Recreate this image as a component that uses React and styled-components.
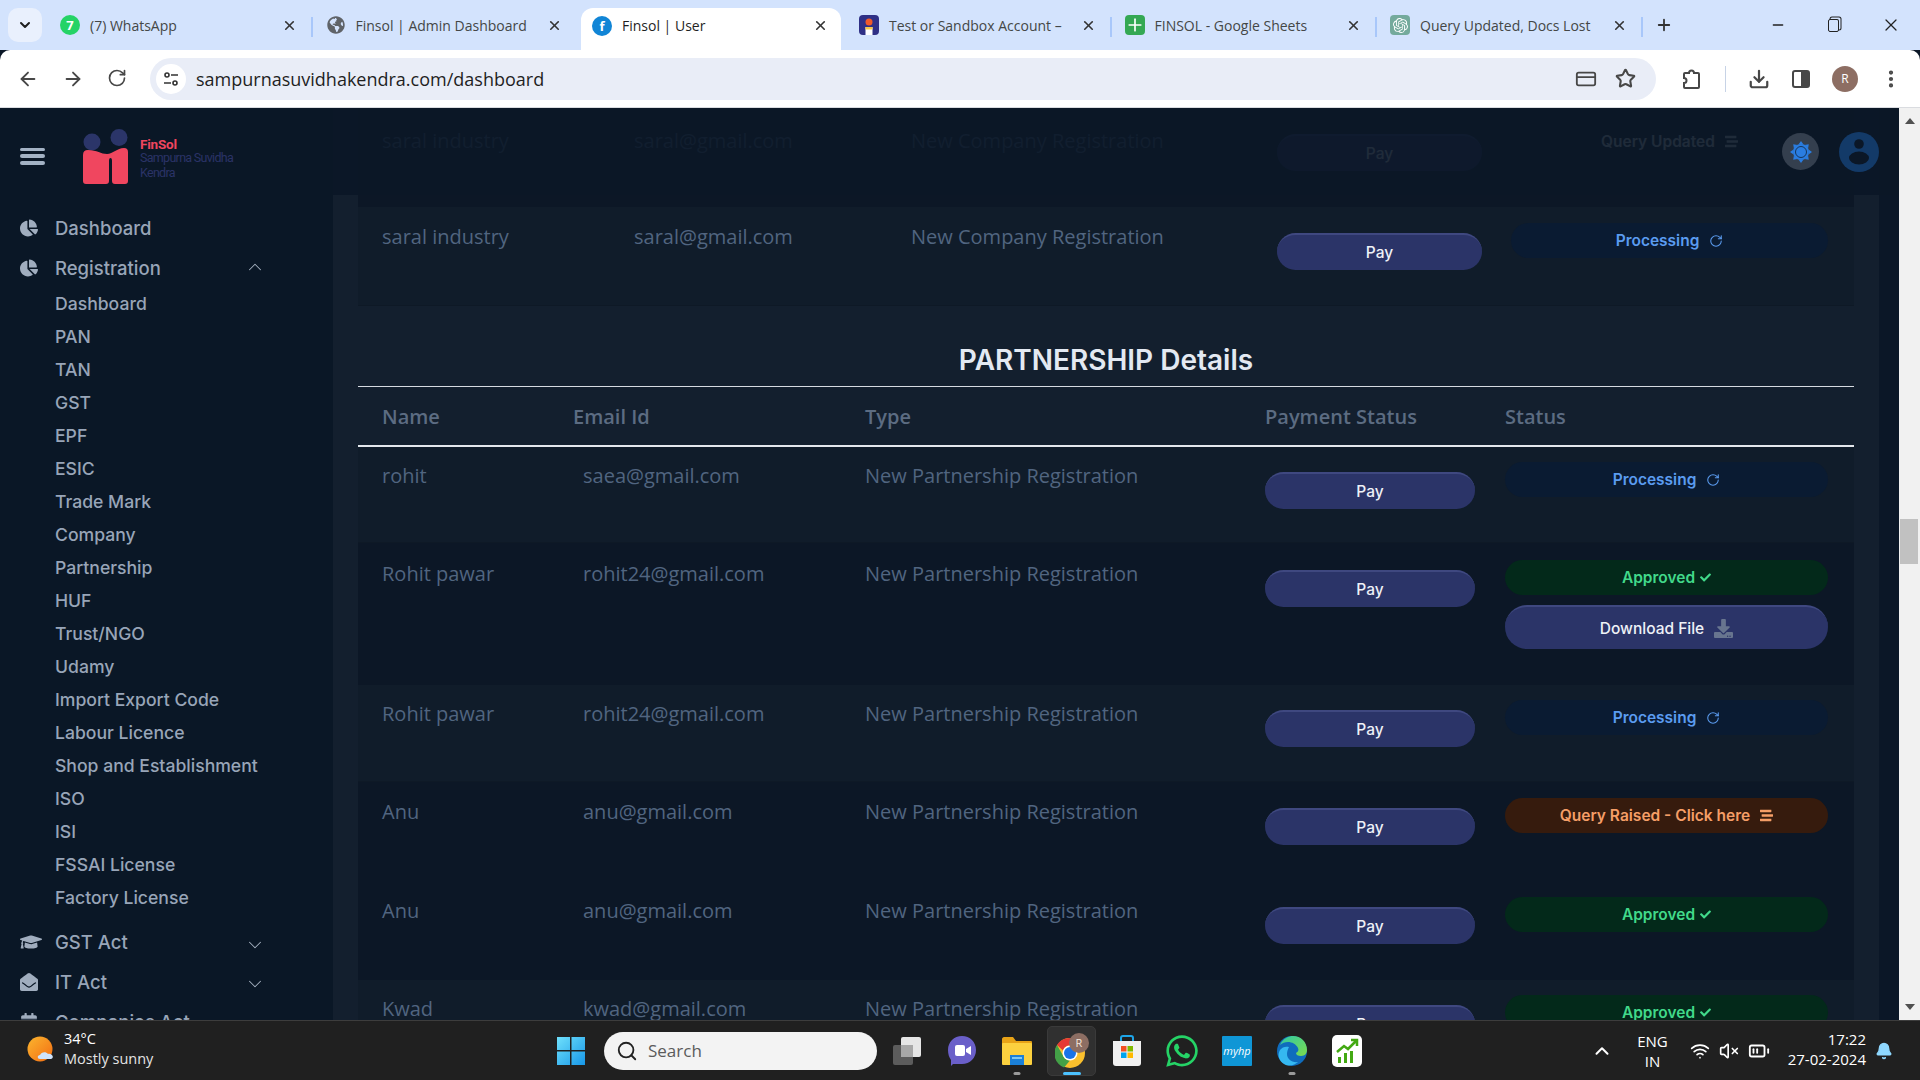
import styled, { createGlobalStyle } from "styled-components";
import {
  ArrowLeft, ArrowRight, RotateCw, Star, Download, EllipsisVertical, CreditCard, X, Plus, Minus, ChevronDown, ChevronUp,
  Search, Wifi, VolumeX, BatteryMedium, Bell,
} from "lucide-react";
import {
  FaChartPie, FaGraduationCap, FaEnvelopeOpen, FaCalendarAlt, FaCheck, FaGlobeAmericas, FaWhatsapp, FaDownload, FaStream,
} from "react-icons/fa";
import { SiOpenai } from "react-icons/si";

const GlobalStyle = createGlobalStyle`
  html, body { margin: 0; padding: 0; overflow: hidden; background: #0b1727; }
  * { box-sizing: border-box; }
`;

const Screen = styled.div`
  width: 1920px;
  height: 1080px;
  display: flex;
  flex-direction: column;
  overflow: hidden;
  font-family: "Open Sans", "Liberation Sans", sans-serif;
`;

/* ---------- browser tabs ---------- */
const TabStrip = styled.div`
  height: 50px;
  background: #d3e3fd;
  display: flex;
  align-items: flex-end;
  padding-left: 8px;
`;
const TabMenu = styled.div`
  width: 34px;
  height: 34px;
  margin-bottom: 8px;
  margin-right: 4px;
  border-radius: 10px;
  background: #e9f0fd;
  display: flex;
  align-items: center;
  justify-content: center;
  color: #1f1f1f;
`;
const Tab = styled.div`
  flex: none;
  width: ${(p) => (p.$active ? "260px" : "265.5px")};
  height: 42px;
  display: flex;
  align-items: center;
  gap: 10px;
  margin: ${(p) => (p.$active ? "0 4px" : "0")};
  padding: ${(p) => (p.$active ? "0 13px 7px 11px" : "0 15px 8px 14px")};
  font-size: 14px;
  color: ${(p) => (p.$active ? "#1f1f1f" : "#444746")};
  background: ${(p) => (p.$active ? "#fff" : "transparent")};
  border-radius: 12px 12px 0 0;
  position: relative;
  &::after {
    content: "";
    display: ${(p) => (p.$sep ? "block" : "none")};
    position: absolute;
    right: -1px;
    top: 9px;
    width: 2px;
    height: 20px;
    background: #a8c7fa;
  }
  svg.close { color: #333; flex: none; }
`;
const TabIcon = styled.span`
  width: 20px;
  height: 20px;
  flex: none;
  display: flex;
  align-items: center;
  justify-content: center;
  border-radius: ${(p) => p.$radius || "4px"};
  background: ${(p) => p.$bg || "transparent"};
  color: ${(p) => p.$color || "#fff"};
  font-size: 13px;
  font-weight: 700;
`;
const TabTitle = styled.span`
  flex: 1;
  white-space: nowrap;
`;
const AddTab = styled.div`
  width: 44px;
  height: 42px;
  padding-bottom: 8px;
  display: flex;
  align-items: center;
  justify-content: center;
  color: #333;
`;
const WindowControls = styled.div`
  margin-left: auto;
  height: 42px;
  padding-bottom: 8px;
  display: flex;
  align-items: center;
  gap: 42px;
  padding-right: 19px;
  color: #222;
`;
const Restore = styled.span`
  width: 11px;
  height: 13px;
  border: 1.5px solid #222;
  border-radius: 2px;
  box-shadow: 2px -2px 0 -0.5px #d3e3fd, 2px -2px 0 0.5px #222;
`;

/* ---------- toolbar ---------- */
const Toolbar = styled.div`
  height: 58px;
  background: #fff;
  border-radius: 10px 10px 0 0;
  border-bottom: 1px solid #dadce0;
  display: flex;
  align-items: center;
  color: #474747;
`;
const NavButtons = styled.div`
  width: 150px;
  padding-left: 17px;
  display: flex;
  gap: 23px;
`;
const Omnibox = styled.div`
  width: 1506px;
  height: 42px;
  border-radius: 21px;
  background: #e9edf7;
  display: flex;
  align-items: center;
  padding-left: 6px;
  padding-right: 20px;
`;
const SiteInfo = styled.span`
  width: 30px;
  height: 30px;
  border-radius: 50%;
  background: #fff;
  display: flex;
  align-items: center;
  justify-content: center;
  margin-right: 10px;
`;
const Url = styled.span`
  flex: 1;
  font-size: 18px;
  color: #1f1f1f;
`;
const OmniActions = styled.div`
  display: flex;
  gap: 18px;
  align-items: center;
`;
const ToolActions = styled.div`
  flex: 1;
  display: flex;
  align-items: center;
  padding-left: 23px;
  gap: 22px;
`;
const ToolSep = styled.span`
  width: 1px;
  height: 26px;
  background: #c7d3e6;
`;
const Avatar = styled.span`
  width: 26px;
  height: 26px;
  border-radius: 50%;
  background: #8d6e63;
  color: #fff;
  font-size: 12px;
  display: flex;
  align-items: center;
  justify-content: center;
`;

/* ---------- page ---------- */
const Viewport = styled.div`
  flex: 1;
  min-height: 0;
  display: flex;
  position: relative;
  background: #0b1727;
  overflow: hidden;
`;
const TopOverlay = styled.div`
  position: absolute;
  top: 0;
  left: 0;
  right: 21px;
  height: 87px;
  background: rgba(11, 23, 39, 0.91);
  z-index: 2;
  display: flex;
  align-items: center;
  padding: 0 20px;
`;
const Burger = styled.div`
  width: 25px;
  height: 17px;
  margin-top: 9px;
  display: flex;
  flex-direction: column;
  justify-content: space-between;
  span {
    height: 3.5px;
    border-radius: 2px;
    background: #a3b2c4;
  }
`;
const Brand = styled.div`
  display: flex;
  align-items: center;
  margin-left: 38px;
  margin-top: 10px;
  gap: 11px;
`;
const BrandText = styled.div`
  display: flex;
  flex-direction: column;
  font-family: Roboto, "Open Sans", sans-serif;
  font-size: 12.5px;
  line-height: 14.5px;
  letter-spacing: -0.7px;
  color: #2b3366;
  margin-top: 4px;
  strong {
    color: #f0465f;
    font-weight: 700;
    font-size: 13.5px;
    letter-spacing: -0.2px;
  }
`;
const HeaderActions = styled.div`
  margin-left: auto;
  display: flex;
  align-items: center;
  gap: 20px;
`;
const RoundIcon = styled.div`
  width: ${(p) => p.$size}px;
  height: ${(p) => p.$size}px;
  border-radius: 50%;
  background: ${(p) => p.$bg};
  display: flex;
  align-items: center;
  justify-content: center;
`;

const Sidebar = styled.aside`
  width: 333px;
  flex: none;
  padding-top: 100px;
  background: #0a1726;
  color: #98a5b8;
  font-family: Inter, "Open Sans", sans-serif;
  font-weight: 500;
`;
const NavItem = styled.div`
  height: 40px;
  display: flex;
  align-items: center;
  padding-left: 20px;
  font-size: 18.5px;
  margin-top: ${(p) => p.$top || 0}px;
`;
const NavIcon = styled.span`
  width: 35px;
  display: flex;
  align-items: center;
  color: #a0adbe;
`;
const NavChevron = styled.span`
  margin-left: auto;
  margin-right: 67px;
  display: flex;
  color: #a7b3c3;
  margin-top: ${(p) => p.$drop || 0}px;
`;
const SubList = styled.div`
  padding-left: 55px;
  margin-top: -1px;
`;
const SubItem = styled.div`
  height: 33px;
  line-height: 33px;
  font-size: 17.6px;
`;

const Main = styled.main`
  width: 1546px;
  flex: none;
  padding: 0 25px;
  background: #131f2e;
  height: 912px;
  overflow: hidden;
`;
const Gutter = styled.div`
  width: 20px;
  flex: none;
  background: #0b1727;
`;
const Row = styled.div`
  display: grid;
  grid-template-columns: ${(p) => p.$cols};
  align-items: start;
  padding: ${(p) => p.$pad}px 0 0 24px;
  height: ${(p) => p.$h}px;
  background: ${(p) => (p.$dark ? "#0c1726" : "#101c2a")};
  box-shadow: inset 0 -1px 0 ${(p) => (p.$dark ? "#0c1726" : "#0e1926")};
`;
const Cell = styled.div`
  font-size: 20px;
  line-height: 27px;
  color: #516580;
  white-space: nowrap;
  margin-top: ${(p) => p.$top || 0}px;
`;
const SectionTitle = styled.h2`
  margin: 0;
  height: 81px;
  padding-top: 36px;
  text-align: center;
  font-family: Inter, "Open Sans", sans-serif;
  font-size: 28px;
  line-height: 36px;
  font-weight: 600;
  color: #e3e9f2;
  border-bottom: 1px solid #d5dae1;
`;
const HeadRow = styled.div`
  display: grid;
  grid-template-columns: 191px 292px 400px 240px 1fr;
  padding-left: 24px;
  height: 60px;
  align-items: center;
  border-bottom: 2px solid #e3e7ec;
  font-size: 20px;
  font-weight: 600;
  color: #5c6c82;
`;
const PayButton = styled.button`
  display: block;
  width: ${(p) => p.$w}px;
  height: 37px;
  margin-top: 10px;
  border: none;
  border-top: 2px solid #3f4880;
  border-radius: 19px;
  background: #2b3468;
  color: #eef1f7;
  font-family: Inter, "Open Sans", sans-serif;
  font-size: 15.5px;
  font-weight: 500;
  padding: 0;
`;
const StatusStack = styled.div`
  width: ${(p) => p.$w}px;
  display: flex;
  flex-direction: column;
  gap: 10px;
`;
const tones = {
  processing: { bg: "#0a1b32", fg: "#5b9cf0" },
  approved: { bg: "#03291a", fg: "#41d98a" },
  query: { bg: "#361b0d", fg: "#f59e67" },
  updated: { bg: "#0e1a29", fg: "#e8ecf2" },
};
const Pill = styled.div`
  height: 35px;
  border-radius: 18px;
  display: flex;
  align-items: center;
  justify-content: center;
  gap: ${(p) => (p.$tone === "approved" ? 5 : 10)}px;
  background: ${(p) => tones[p.$tone].bg};
  color: ${(p) => tones[p.$tone].fg};
  font-family: Inter, "Open Sans", sans-serif;
  font-size: 15.5px;
  font-weight: 600;
`;
const DownloadButton = styled.button`
  height: 44px;
  border: none;
  border-top: 2px solid #3f4880;
  border-radius: 22px;
  background: #2b3468;
  color: #eef1f7;
  display: flex;
  align-items: center;
  justify-content: center;
  gap: 10px;
  font-family: Inter, "Open Sans", sans-serif;
  font-size: 15.5px;
  font-weight: 500;
  svg { color: #68758f; }
`;

const Scrollbar = styled.div`
  width: 21px;
  flex: none;
  background: #f1f1f1;
  position: relative;
  display: flex;
  flex-direction: column;
  align-items: center;
  justify-content: space-between;
  padding: 10px 0;
`;
const Arrow = styled.span`
  width: 0;
  height: 0;
  border-left: 5px solid transparent;
  border-right: 5px solid transparent;
  ${(p) => (p.$down ? "border-top: 6px solid #505050;" : "border-bottom: 6px solid #505050;")}
`;
const Thumb = styled.span`
  position: absolute;
  top: 411px;
  left: 1px;
  width: 18px;
  height: 45px;
  background: #c1c1c1;
`;

/* ---------- taskbar ---------- */
const Taskbar = styled.div`
  height: 60px;
  background: #202020;
  border-top: 1px solid #3d3d3d;
  display: flex;
  align-items: center;
  color: #fff;
  font-family: "Open Sans", sans-serif;
`;
const Weather = styled.div`
  width: 556px;
  padding-left: 27px;
  display: flex;
  align-items: center;
  gap: 7px;
`;
const WeatherText = styled.div`
  font-size: 14.5px;
  line-height: 20px;
  margin-top: -3px;
  span { display: block; color: #e4e4e4; }
`;
const SearchBox = styled.div`
  width: 273px;
  height: 38px;
  border-radius: 19px;
  background: #f3f3f3;
  margin: 0 2px 0 18px;
  display: flex;
  align-items: center;
  padding-left: 12px;
  gap: 10px;
  color: #5b5b5b;
  font-size: 17px;
  svg { color: #222; }
`;
const TaskIcon = styled.div`
  width: 55px;
  height: 50px;
  display: flex;
  align-items: center;
  justify-content: center;
  position: relative;
  &::before {
    content: "";
    display: ${(p) => (p.$active ? "block" : "none")};
    position: absolute;
    left: 3px;
    right: 3px;
    top: 0;
    bottom: 0;
    background: #303030;
    border: 1px solid #3a3a3a;
    border-radius: 5px;
  }
  > * { position: relative; }
  &::after {
    content: "";
    display: ${(p) => (p.$dot ? "block" : "none")};
    position: absolute;
    left: 50%;
    transform: translateX(-50%);
    bottom: 1px;
    width: ${(p) => (p.$active ? "18px" : "7px")};
    height: 3px;
    border-radius: 2px;
    background: ${(p) => (p.$active ? "#4cc2ff" : "#9a9a9a")};
  }
`;
const Tray = styled.div`
  margin-left: auto;
  display: flex;
  align-items: center;
  padding-right: 27px;
  font-size: 15px;
`;
const Lang = styled.div`
  text-align: center;
  line-height: 20px;
  margin: 0 22px 0 24px;
`;
const Clock = styled.div`
  text-align: right;
  line-height: 20px;
  margin: -4px 9px 0 18px;
`;
const TrayIcons = styled.div`
  display: flex;
  align-items: center;
  gap: 9px;
`;

const ROW1 = "252px 277px 366px 234px 1fr";
const ROW2 = "201px 282px 400px 240px 1fr";

const partnerRows = [
  { name: "rohit", email: "saea@gmail.com", h: 96, pad: 15, status: ["processing"] },
  { name: "Rohit pawar", email: "rohit24@gmail.com", h: 142, pad: 17, dark: true, status: ["approved", "download"] },
  { name: "Rohit pawar", email: "rohit24@gmail.com", h: 97, pad: 15, status: ["processing"] },
  { name: "Anu", email: "anu@gmail.com", h: 98, pad: 16, dark: true, status: ["query"] },
  { name: "Anu", email: "anu@gmail.com", h: 100, pad: 17, dark: true, status: ["approved"] },
  { name: "Kwad", email: "kwad@gmail.com", h: 100, pad: 15, status: ["approved"] },
];

const subItems = [
  "Dashboard", "PAN", "TAN", "GST", "EPF", "ESIC", "Trade Mark", "Company", "Partnership", "HUF", "Trust/NGO", "Udamy",
  "Import Export Code", "Labour Licence", "Shop and Establishment", "ISO", "ISI", "FSSAI License", "Factory License",
];

const Status = ({ kind }) => {
  if (kind === "processing") return <Pill $tone="processing">Processing <RotateCw size={14} strokeWidth={1.8} /></Pill>;
  if (kind === "approved") return <Pill $tone="approved">Approved <FaCheck size={11} /></Pill>;
  if (kind === "query") return <Pill $tone="query">Query Raised - Click here <FaStream size={13} /></Pill>;
  if (kind === "updated") return <Pill $tone="updated">Query Updated <FaStream size={13} /></Pill>;
  return <DownloadButton>Download File <FaDownload size={19} /></DownloadButton>;
};

const TuneIcon = () => (
  <svg width="16" height="16" viewBox="0 0 16 16" fill="none" stroke="#333" strokeWidth="1.6">
    <circle cx="4" cy="4" r="2" />
    <path d="M8 4h7M1 12h7" />
    <circle cx="12" cy="12" r="2" />
  </svg>
);
const ExtensionIcon = () => (
  <svg width="24" height="24" viewBox="0 0 24 24" fill="none" stroke="#474747" strokeWidth="2">
    <path d="M6 6h4a2.500 2.500 0 0 1 5 0h4a1 1 0 0 1 1 1v13a1 1 0 0 1-1 1H6a1 1 0 0 1-1-1v-4a2.500 2.500 0 0 0 0-5V7a1 1 0 0 1 1-1z" />
  </svg>
);
const SidePanelIcon = () => (
  <svg width="18" height="20" viewBox="0 0 18 20" fill="none">
    <rect x="1" y="2" width="16" height="16" rx="2" stroke="#474747" strokeWidth="2" />
    <rect x="9" y="2" width="8" height="16" fill="#474747" />
  </svg>
);
const SandboxIcon = () => (
  <svg width="20" height="20" viewBox="0 0 20 20">
    <rect width="20" height="20" rx="4" fill="#2f3086" />
    <circle cx="10" cy="7" r="3.500" fill="#f0592a" />
    <rect x="6.500" y="12" width="7" height="8" fill="#fff" />
    <rect x="6.500" y="12" width="7" height="2.500" fill="#f7c948" />
  </svg>
);
const Logo = () => (
  <svg width="46" height="56" viewBox="0 0 46 56">
    <circle cx="9" cy="13" r="8.500" fill="#2b3569" />
    <circle cx="36" cy="8.500" r="8.500" fill="#2b3569" />
    <path d="M0 26Q0 21 5 21C14 21 18 25 24 25C30 25 34 19 41 19Q45 19 45 23V52Q45 55 42 55H32Q29 55 29 52V32Q29 29 27.500 29Q26 29 26 32V52Q26 55 23 55H3Q0 55 0 52Z" fill="#f0465f" />
  </svg>
);
const GearIcon = () => (
  <svg width="22" height="22" viewBox="0 0 22 22" fill="#2a7de1">
    {[0, 45, 90, 135, 180, 225, 270, 315].map((a) => (
      <path key={a} d="M8.500 3.500L11 0l2.500 3.500z" transform={`rotate(${a} 11 11)`} />
    ))}
    <circle cx="11" cy="11" r="8" />
    <circle cx="11" cy="11" r="5.500" fill="none" stroke="#16365c" strokeWidth="1" />
  </svg>
);
const UserIcon = () => (
  <svg width="22" height="26" viewBox="0 0 22 26" fill="#0b1727">
    <circle cx="11" cy="5" r="4.800" />
    <ellipse cx="11" cy="19" rx="10" ry="6.500" />
  </svg>
);
const WindowsLogo = () => (
  <svg width="30" height="30" viewBox="0 0 30 30">
    <defs>
      <linearGradient id="win" x1="0" y1="0" x2="1" y2="1">
        <stop offset="0" stopColor="#6fe0fb" />
        <stop offset="1" stopColor="#1797e8" />
      </linearGradient>
    </defs>
    <path d="M1 1h13v13H1zM15.500 1H29v13H15.500zM1 15.500h13V29H1zM15.500 15.500H29V29H15.500z" fill="url(#win)" />
  </svg>
);
const TaskViewIcon = () => (
  <svg width="30" height="30" viewBox="0 0 30 30">
    <rect x="1" y="9" width="20" height="20" rx="2" fill="#5c5c5c" />
    <rect x="9" y="1" width="20" height="20" rx="2" fill="#e6e6e6" />
    <rect x="9" y="9" width="12" height="12" fill="#a8a8a8" />
  </svg>
);
const MeetIcon = () => (
  <svg width="30" height="32" viewBox="0 0 30 32">
    <path d="M15 1c8 0 14 6 14 14s-6 14-14 14H6l-2 2v-6C2 22 1 19 1 15 1 7 7 1 15 1z" fill="#6a5fc9" />
    <rect x="8" y="10" width="10" height="11" rx="2" fill="#fff" />
    <path d="M19 14l5-3v9l-5-3z" fill="#fff" />
  </svg>
);
const FolderIcon = () => (
  <svg width="32" height="30" viewBox="0 0 32 30">
    <path d="M1 3c0-1 1-2 2-2h9l3 4h15c1 0 1 1 1 1v4H1z" fill="#e8a317" />
    <rect x="1" y="7" width="30" height="22" rx="1" fill="#fcd13f" />
    <rect x="9" y="19" width="14" height="10" fill="#1b80d8" />
    <rect x="11" y="21" width="10" height="2" fill="#7cc8f5" />
  </svg>
);
const ChromeIcon = () => (
  <svg width="34" height="36" viewBox="0 0 34 36">
    <circle cx="15" cy="20" r="15" fill="#fbc02d" />
    <path d="M15 5a15 15 0 0 1 13 7.500H15a7.500 7.500 0 0 0-7 5L2 12A15 15 0 0 1 15 5z" fill="#e53935" />
    <path d="M2 12l6.500 11.500a7.500 7.500 0 0 0 6.500 4L9 34.500A15 15 0 0 1 2 12z" fill="#43a047" />
    <circle cx="15" cy="20" r="7.500" fill="#fff" />
    <circle cx="15" cy="20" r="6" fill="#1a73e8" />
    <circle cx="24" cy="10" r="10" fill="#8d6e63" />
    <text x="24" y="14" fontSize="11" textAnchor="middle" fill="#f3e5dc" fontFamily="Open Sans">R</text>
  </svg>
);
const StoreIcon = () => (
  <svg width="30" height="32" viewBox="0 0 30 32">
    <path d="M9 7V3c0-1 1-2 2-2h8c1 0 2 1 2 2v4" stroke="#1da5e8" strokeWidth="2" fill="none" />
    <path d="M1 6h28v22c0 2-1 3-3 3H4c-2 0-3-1-3-3z" fill="#f1f1f1" />
    <rect x="9" y="11" width="5.500" height="5.500" fill="#f25022" />
    <rect x="15.500" y="11" width="5.500" height="5.500" fill="#7fba00" />
    <rect x="9" y="17.500" width="5.500" height="5.500" fill="#00a4ef" />
    <rect x="15.500" y="17.500" width="5.500" height="5.500" fill="#ffb900" />
  </svg>
);
const HpIcon = () => (
  <svg width="30" height="30" viewBox="0 0 30 30">
    <rect width="30" height="30" rx="1" fill="#0f96d6" />
    <text x="15" y="19" textAnchor="middle" fontSize="11" fontStyle="italic" fill="#fff" fontFamily="Open Sans">myhp</text>
  </svg>
);
const EdgeIcon = () => (
  <svg width="30" height="32" viewBox="0 0 30 32">
    <defs>
      <linearGradient id="edge" x1="0" y1="0" x2="1" y2="1">
        <stop offset="0" stopColor="#2fc9a5" />
        <stop offset="1" stopColor="#7ddb4c" />
      </linearGradient>
    </defs>
    <circle cx="15" cy="16" r="15" fill="#0f6cbd" />
    <path d="M3 10C6 3 12 1 16 1c8 0 14 6 14 14 0 3-2 6-6 6-3 0-5-1-5-3 2-1 3-3 2-5-2-4-6-6-10-6-3 0-6 1-8 3z" fill="url(#edge)" />
    <path d="M10 19c0 5 5 9 11 8-3 3-9 5-14 2C2 26 0 20 3 15c2-3 6-4 9-3-1 2-2 4-2 7z" fill="#35b8f0" />
  </svg>
);
const StocksIcon = () => (
  <svg width="30" height="32" viewBox="0 0 30 32">
    <rect width="30" height="32" rx="5" fill="#fff" />
    <path d="M5 17l7-6 4 3 8-8M19 5h6v6" stroke="#43a913" strokeWidth="2.500" fill="none" />
    <path d="M6 22h3v6H6zM12 18h3v10h-3zM18 16h3v12h-3z" fill="#43a913" />
  </svg>
);
const SunCloud = () => (
  <svg width="30" height="30" viewBox="0 0 30 30">
    <defs>
      <linearGradient id="sun" x1="0" y1="0" x2="1" y2="1">
        <stop offset="0" stopColor="#fbb62f" />
        <stop offset="1" stopColor="#f36c12" />
      </linearGradient>
    </defs>
    <circle cx="13" cy="13" r="12.500" fill="url(#sun)" />
    <path d="M13 23c-3 0-3-4 0-4 1-3 6-4 8-1 4-1 7 4 3 5z" fill="#cfe3fb" />
  </svg>
);

const CloseIcon = () => <X className="close" size={15} strokeWidth={2.6} />;

const App = () => {
  return (
    <Screen>
      <GlobalStyle />
      <TabStrip>
        <TabMenu><ChevronDown size={16} strokeWidth={3} /></TabMenu>
        <Tab $sep>
          <TabIcon $bg="#25d366" $radius="50%">7</TabIcon>
          <TabTitle>(7) WhatsApp</TabTitle>
          <CloseIcon />
        </Tab>
        <Tab>
          <TabIcon $color="#5f6368"><FaGlobeAmericas size={18} /></TabIcon>
          <TabTitle>Finsol | Admin Dashboard</TabTitle>
          <CloseIcon />
        </Tab>
        <Tab $active>
          <TabIcon $bg="#1185d6" $radius="50%">f</TabIcon>
          <TabTitle>Finsol | User</TabTitle>
          <CloseIcon />
        </Tab>
        <Tab $sep>
          <TabIcon><SandboxIcon /></TabIcon>
          <TabTitle>Test or Sandbox Account –</TabTitle>
          <CloseIcon />
        </Tab>
        <Tab $sep>
          <TabIcon $bg="#34a853"><Plus size={20} strokeWidth={2} /></TabIcon>
          <TabTitle>FINSOL - Google Sheets</TabTitle>
          <CloseIcon />
        </Tab>
        <Tab $sep>
          <TabIcon $bg="#74aa9c"><SiOpenai size={15} /></TabIcon>
          <TabTitle>Query Updated, Docs Lost</TabTitle>
          <CloseIcon />
        </Tab>
        <AddTab><Plus size={18} strokeWidth={2.4} /></AddTab>
        <WindowControls>
          <Minus size={16} />
          <Restore />
          <X size={20} strokeWidth={1.5} />
        </WindowControls>
      </TabStrip>

      <Toolbar>
        <NavButtons>
          <ArrowLeft size={22} />
          <ArrowRight size={22} />
          <RotateCw size={20} />
        </NavButtons>
        <Omnibox>
          <SiteInfo><TuneIcon /></SiteInfo>
          <Url>sampurnasuvidhakendra.com/dashboard</Url>
          <OmniActions>
            <CreditCard size={22} />
            <Star size={21} strokeWidth={2.4} />
          </OmniActions>
        </Omnibox>
        <ToolActions>
          <ExtensionIcon />
          <ToolSep />
          <Download size={22} strokeWidth={2.4} />
          <SidePanelIcon />
          <Avatar>R</Avatar>
          <EllipsisVertical size={22} strokeWidth={2.6} />
        </ToolActions>
      </Toolbar>

      <Viewport>
        <TopOverlay>
          <Burger><span /><span /><span /></Burger>
          <Brand>
            <Logo />
            <BrandText>
              <strong>FinSol</strong>
              <span>Sampurna Suvidha</span>
              <span>Kendra</span>
            </BrandText>
          </Brand>
          <HeaderActions>
            <RoundIcon $size={37} $bg="#343f4e"><GearIcon /></RoundIcon>
            <RoundIcon $size={40} $bg="#133a68"><UserIcon /></RoundIcon>
          </HeaderActions>
        </TopOverlay>

        <Sidebar>
          <NavItem><NavIcon><FaChartPie size={18} /></NavIcon>Dashboard</NavItem>
          <NavItem>
            <NavIcon><FaChartPie size={18} /></NavIcon>Registration
            <NavChevron $drop={-3}><ChevronUp size={22} strokeWidth={1.1} /></NavChevron>
          </NavItem>
          <SubList>
            {subItems.map((item) => <SubItem key={item}>{item}</SubItem>)}
          </SubList>
          <NavItem $top={8}>
            <NavIcon><FaGraduationCap size={22} /></NavIcon>GST Act
            <NavChevron $drop={5}><ChevronDown size={22} strokeWidth={1.1} /></NavChevron>
          </NavItem>
          <NavItem>
            <NavIcon><FaEnvelopeOpen size={18} /></NavIcon>IT Act
            <NavChevron $drop={3}><ChevronDown size={22} strokeWidth={1.1} /></NavChevron>
          </NavItem>
          <NavItem>
            <NavIcon><FaCalendarAlt size={18} /></NavIcon>Companies Act
            <NavChevron $drop={24}><ChevronDown size={22} strokeWidth={1.1} /></NavChevron>
          </NavItem>
        </Sidebar>

        <Main>
          <Row $cols={ROW1} $h={99} $pad={16} $dark>
            <Cell $top={3}>saral industry</Cell>
            <Cell $top={3}>saral@gmail.com</Cell>
            <Cell $top={3}>New Company Registration</Cell>
            <div><PayButton $w={205}>Pay</PayButton></div>
            <StatusStack $w={317}><Status kind="updated" /></StatusStack>
          </Row>
          <Row $cols={ROW1} $h={99} $pad={16}>
            <Cell>saral industry</Cell>
            <Cell>saral@gmail.com</Cell>
            <Cell>New Company Registration</Cell>
            <div><PayButton $w={205}>Pay</PayButton></div>
            <StatusStack $w={317}><Status kind="processing" /></StatusStack>
          </Row>

          <SectionTitle>PARTNERSHIP Details</SectionTitle>
          <HeadRow>
            <span>Name</span>
            <span>Email Id</span>
            <span>Type</span>
            <span>Payment Status</span>
            <span>Status</span>
          </HeadRow>
          {partnerRows.map((row, i) => (
            <Row key={i} $cols={ROW2} $h={row.h} $pad={row.pad} $dark={row.dark}>
              <Cell>{row.name}</Cell>
              <Cell>{row.email}</Cell>
              <Cell>New Partnership Registration</Cell>
              <div><PayButton $w={210}>Pay</PayButton></div>
              <StatusStack $w={323}>
                {row.status.map((s) => <Status key={s} kind={s} />)}
              </StatusStack>
            </Row>
          ))}
        </Main>
        <Gutter />
        <Scrollbar>
          <Arrow />
          <Thumb />
          <Arrow $down />
        </Scrollbar>
      </Viewport>

      <Taskbar>
        <Weather>
          <SunCloud />
          <WeatherText>34°C<span>Mostly sunny</span></WeatherText>
        </Weather>
        <WindowsLogo />
        <SearchBox><Search size={22} strokeWidth={2} />Search</SearchBox>
        <TaskIcon><TaskViewIcon /></TaskIcon>
        <TaskIcon><MeetIcon /></TaskIcon>
        <TaskIcon $dot><FolderIcon /></TaskIcon>
        <TaskIcon $active $dot><ChromeIcon /></TaskIcon>
        <TaskIcon><StoreIcon /></TaskIcon>
        <TaskIcon><FaWhatsapp size={36} color="#25d366" /></TaskIcon>
        <TaskIcon><HpIcon /></TaskIcon>
        <TaskIcon $dot><EdgeIcon /></TaskIcon>
        <TaskIcon><StocksIcon /></TaskIcon>
        <Tray>
          <ChevronUp size={22} strokeWidth={2.2} />
          <Lang>ENG<br />IN</Lang>
          <TrayIcons>
            <Wifi size={20} />
            <VolumeX size={20} />
            <BatteryMedium size={22} />
          </TrayIcons>
          <Clock>17:22<br />27-02-2024</Clock>
          <Bell size={18} color="#8fd8ff" fill="#8fd8ff" />
        </Tray>
      </Taskbar>
    </Screen>
  );
};

export default App;
